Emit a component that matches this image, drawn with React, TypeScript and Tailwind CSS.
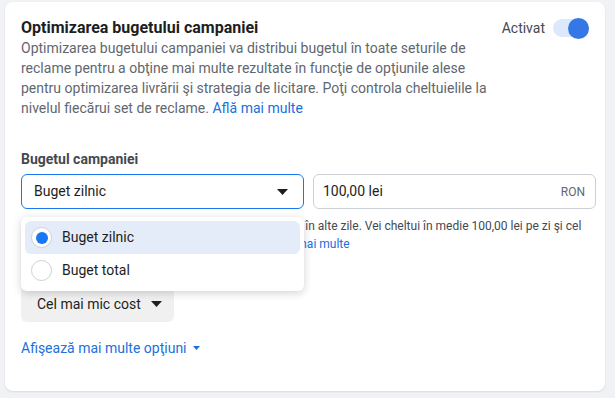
import React from "react";

function Caret({ w = 12, h = 7, color = "#1c1e21" }: { w?: number; h?: number; color?: string }) {
  return (
    <svg width={w} height={h} viewBox={`0 0 ${w} ${h}`} className="shrink-0">
      <polygon points={`0,0 ${w},0 ${w / 2},${h}`} fill={color} />
    </svg>
  );
}

function Radio({ checked }: { checked: boolean }) {
  return (
    <span className="flex h-[21px] w-[21px] shrink-0 items-center justify-center rounded-full border border-[#ccd0d5] bg-white">
      {checked && <span className="h-[12px] w-[12px] rounded-full bg-[#1877f2]" />}
    </span>
  );
}

export default function App() {
  return (
    <div
      className="min-h-[398px] w-[615px] bg-[#f0f2f5] pl-[5px] pt-[2px]"
      style={{ fontFamily: "Roboto, 'Liberation Sans', sans-serif" }}
    >
      <div className="relative h-[389px] w-[600px] rounded-lg bg-white px-4 pt-4 shadow-[0_1px_2px_rgba(0,0,0,0.1)]">
        {/* header */}
        <div className="flex items-start justify-between">
          <div className="w-[472px]">
            <div className="text-[16px] font-bold leading-5 text-[#1c1e21]">Optimizarea bugetului campaniei</div>
            <p className="text-[14px] leading-5 text-[#606770]">
              Optimizarea bugetului campaniei va distribui bugetul în toate seturile de reclame pentru a obţine mai
              multe rezultate în funcţie de opţiunile alese pentru optimizarea livrării şi strategia de licitare. Poţi
              controla cheltuielile la nivelul fiecărui set de reclame.{" "}
              <span className="text-[#216fdb]">Află mai multe</span>
            </p>
          </div>
          <div className="flex items-center gap-2">
            <span className="text-[14px] leading-5 text-[#444950]">Activat</span>
            <span className="relative flex h-[18px] w-[36px] items-center rounded-full bg-[#dce8fb]">
              <span className="absolute right-0 h-[21px] w-[21px] rounded-full bg-[#3578e5]" />
            </span>
          </div>
        </div>

        {/* budget */}
        <div className="mt-[31px] text-[14px] font-bold leading-5 text-[#444950]">Bugetul campaniei</div>
        <div className="relative mt-[5px] flex w-[575px] gap-[9px]">
          <div className="flex h-[35px] w-[283px] shrink-0 items-center justify-between rounded-md border border-[#1877f2] pl-3 pr-[15px]">
            <span className="text-[14px] text-[#1c1e21]">Buget zilnic</span>
            <Caret w={11} h={6} />
          </div>
          <div className="flex h-[35px] w-[283px] shrink-0 items-center justify-between rounded-md border border-[#ccd0d5] pl-[9px] pr-[10px]">
            <span className="text-[14px] text-[#1c1e21]">100,00 lei</span>
            <span className="text-[12px] text-[#606770]">RON</span>
          </div>

          {/* dropdown menu */}
          <div className="absolute left-0 top-[43px] z-10 w-[283px] rounded-md bg-white p-1 shadow-[0_2px_8px_rgba(0,0,0,0.18)]">
            <div className="flex h-[33px] items-center gap-[10px] rounded-md bg-[#e4ecf9] pl-[6px]">
              <Radio checked />
              <span className="text-[14px] text-[#1c1e21]">Buget zilnic</span>
            </div>
            <div className="flex h-[33px] items-center gap-[10px] rounded-md pl-[6px]">
              <Radio checked={false} />
              <span className="text-[14px] text-[#1c1e21]">Buget total</span>
            </div>
          </div>
        </div>

        <div className="mt-[8px] w-[570px] text-[12px] leading-[18px] text-[#444950]">
          <div className="whitespace-nowrap">
            Poţi cheltui cu 25% mai mult în unele zile şi mai puţin în alte zile. Vei cheltui în medie 100,00 lei pe zi
            şi cel
          </div>
          <div className="whitespace-nowrap">
            mult 700,00 lei pe o săptămână calendaristică.{" "}
            <span className="text-[#216fdb]">Află mai multe</span>
          </div>
        </div>

        <div className="mt-[9px] text-[14px] font-bold leading-5 text-[#444950]">Strategia de licitaţie pentru campanie</div>
        <div className="mt-1 flex h-9 w-[153px] items-center gap-[10px] rounded-md bg-[#f0f0f0] pl-4">
          <span className="text-[14px] text-[#1c1e21]">Cel mai mic cost</span>
          <Caret w={11} h={6} />
        </div>

        <div className="mt-4 flex items-center gap-[6px] text-[14px] leading-5 text-[#216fdb]">
          Afişează mai multe opţiuni
          <Caret w={7} h={4} color="#216fdb" />
        </div>
      </div>
    </div>
  );
}
